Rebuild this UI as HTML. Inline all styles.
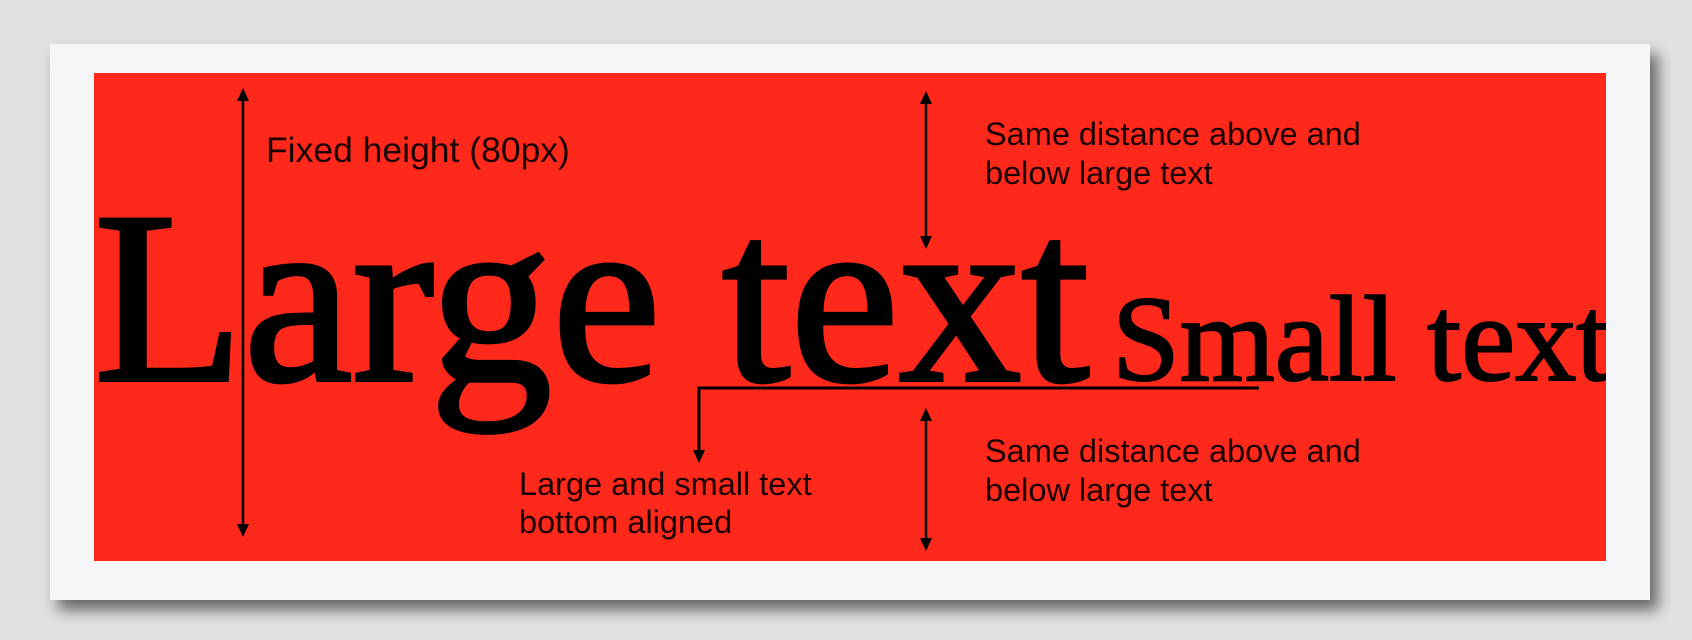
<!DOCTYPE html>
<html><head><style>
html,body{margin:0;padding:0;background:#e1e1e1;width:1692px;height:640px;overflow:hidden}
.card{position:absolute;left:50px;top:44px;width:1600px;height:556px;background:#f5f6f8;box-shadow:8px 10px 14px rgba(0,0,0,.55)}
svg{position:absolute;left:0;top:0}
</style></head><body>
<div class="card"></div>
<svg width="1692" height="640" viewBox="0 0 1692 640">
<defs><clipPath id="c"><rect x="94" y="73" width="1512" height="488"/></clipPath></defs>
<rect x="94" y="73" width="1512" height="488" fill="#fe291b"/>
<g clip-path="url(#c)" font-family="Liberation Serif, serif" fill="#000" stroke="#000">
<text x="94" y="380" font-size="245" stroke-width="4">Large text</text>
<text x="1112" y="380" font-size="122" stroke-width="2">Small text</text>
</g>
<g stroke="#000" stroke-width="2.5" fill="none">
<line x1="243" y1="98" x2="243" y2="528"/>
<line x1="926" y1="101" x2="926" y2="240"/>
<line x1="926" y1="418" x2="926" y2="542"/>
<polyline points="1259,388 699,388 699,455" stroke-width="3"/>
</g>
<g fill="#000">
<polygon points="243,88 237,101 249,101"/>
<polygon points="243,537 237,524 249,524"/>
<polygon points="926,91 920,104 932,104"/>
<polygon points="926,249 920,236 932,236"/>
<polygon points="926,408 920,421 932,421"/>
<polygon points="926,551 920,538 932,538"/>
<polygon points="699,463 693,450 705,450"/>
</g>
<g font-family="Liberation Sans, sans-serif" font-size="32.5" fill="#1a0000">
<text x="266" y="162" font-size="35.5">Fixed height (80px)</text>
<text x="985" y="145">Same distance above and</text>
<text x="985" y="184">below large text</text>
<text x="985" y="462">Same distance above and</text>
<text x="985" y="501">below large text</text>
<text x="519" y="495">Large and small text</text>
<text x="519" y="533">bottom aligned</text>
</g>
</svg>
</body></html>
